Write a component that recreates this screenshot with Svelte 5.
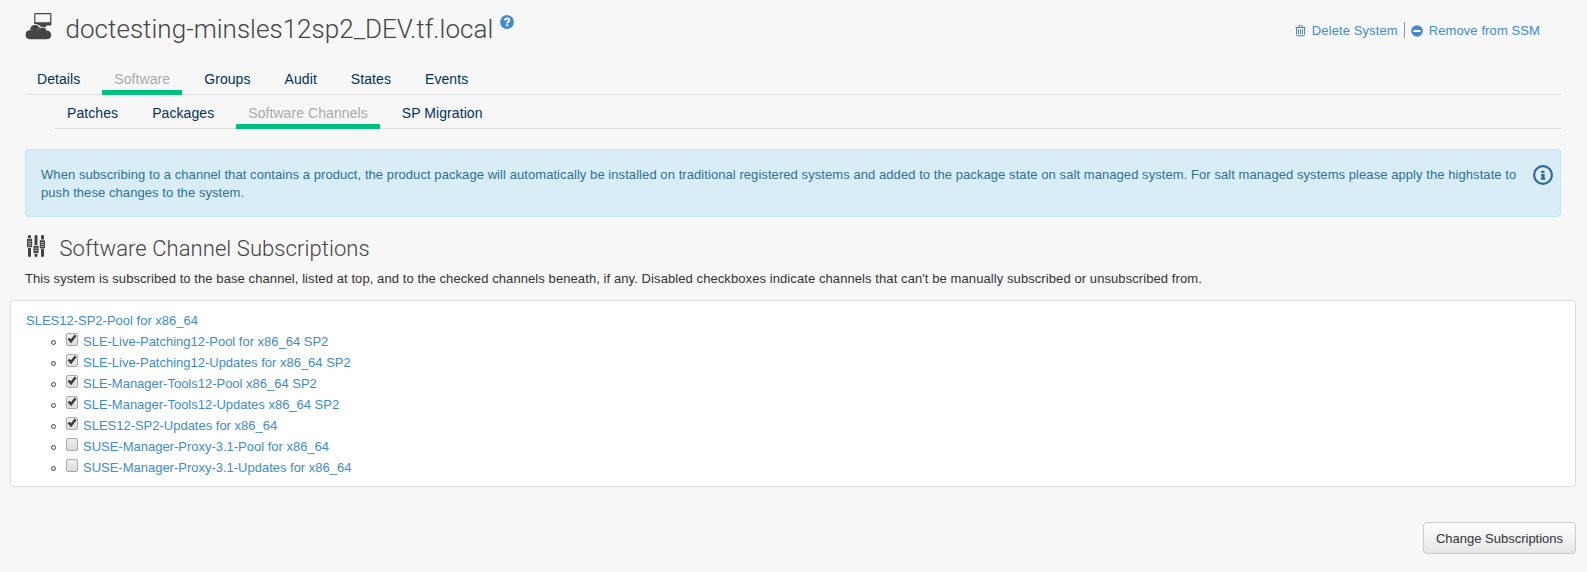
<script>
  const tabs = ['Details', 'Software', 'Groups', 'Audit', 'States', 'Events'];
  const subtabs = ['Patches', 'Packages', 'Software Channels', 'SP Migration'];
  let channels = $state([
    { name: 'SLE-Live-Patching12-Pool for x86_64 SP2', on: true },
    { name: 'SLE-Live-Patching12-Updates for x86_64 SP2', on: true },
    { name: 'SLE-Manager-Tools12-Pool x86_64 SP2', on: true },
    { name: 'SLE-Manager-Tools12-Updates x86_64 SP2', on: true },
    { name: 'SLES12-SP2-Updates for x86_64', on: true },
    { name: 'SUSE-Manager-Proxy-3.1-Pool for x86_64', on: false },
    { name: 'SUSE-Manager-Proxy-3.1-Updates for x86_64', on: false }
  ]);
</script>

<main>
  <header>
    <svg class="sys" width="27" height="27" viewBox="0 0 27 27">
      <path fill="#444" fill-rule="evenodd" d="M10.3 0H25.2Q26.4 0 26.4 1.2V11.4Q26.4 12.6 25.2 12.6H21L21.200 14.300H15.400V12.600H10.300Q9.200 12.600 9.200 11.400V1.200Q9.200 0 10.300 0ZM10.400 1.200V9.300H25.200V1.200Z" />
      <path fill="#444" stroke="#f7f7f7" stroke-width="1.600" paint-order="stroke" d="M5.400 26.300C2.500 26.300.6 24.700.6 21.700C.6 19 2.500 17.200 5.400 17.100C4.800 14 7 11.900 9.900 11.900C12.400 11.900 14.200 13.200 15 15.200C18 13.800 21.100 15 21.300 17.600C24.200 17.500 26.200 19.200 26.200 21.900C26.200 24.700 24.300 26.300 21.500 26.300Z" />
      <path fill="none" stroke="#999" stroke-width=".6" d="M15 15.200C13.600 15.600 12.700 16.500 12.400 17.600M5.400 17.100Q6.500 17 7.600 17.500" />
    </svg>
    <h1>doctesting-minsles12sp2_DEV.tf.local</h1>
    <svg class="help" width="14" height="14" viewBox="0 0 14 14">
      <circle cx="7" cy="7" r="6.9" fill="#428bca" />
      <path d="M4.8 5.3Q5.1 3.5 7.1 3.5Q9.3 3.5 9.3 5.3Q9.3 6.3 8.1 6.9Q7.2 7.4 7.2 8.4" fill="none" stroke="#fff" stroke-width="1.9" />
      <rect x="6.2" y="9.3" width="2" height="1.9" fill="#fff" />
    </svg>
    <nav class="actions">
      <a href="#delete">
        <svg width="11" height="12" viewBox="0 0 11 12" fill="none" stroke="#428bca">
          <path d="M.5 2.5H10.500M3.300 2.300V1.500Q3.300.7 4 .7H7Q7.700.7 7.700 1.500V2.300M1.500 2.700V9.600Q1.500 10.800 2.800 10.800H8.200Q9.500 10.800 9.500 9.600V2.700M3.500 4.300V9.200M5.500 4.300V9.200M7.500 4.300V9.200" />
        </svg><span>Delete System</span>
      </a>
      <a class="second" href="#remove">
        <svg width="12" height="12" viewBox="0 0 12 12">
          <circle cx="6" cy="6" r="5.8" fill="#428bca" />
          <rect x="2.5" y="5" width="7" height="2" rx=".4" fill="#fff" />
        </svg><span>Remove from SSM</span>
      </a>
    </nav>
  </header>

  <nav class="tabs">
    {#each tabs as t, i}<a href="#tab" class:active={i === 1}>{t}</a>{/each}
  </nav>
  <nav class="tabs sub">
    {#each subtabs as t, i}<a href="#tab" class:active={i === 2}>{t}</a>{/each}
  </nav>

  <div class="alert">
    <p>When subscribing to a channel that contains a product, the product package will automatically be installed on traditional registered systems and added to the package state on salt managed system. For salt managed systems please apply the highstate to push these changes to the system.</p>
    <svg width="20" height="20" viewBox="0 0 20 20">
      <circle cx="10" cy="10" r="8.9" fill="none" stroke="#31689b" stroke-width="2.2" />
      <path fill="#31689b" d="M8.300 5.800H11.500V8H8.300ZM8 9H11.700V13H12.200V14.700H7.900V13H8.500V10.400H8Z" />
    </svg>
  </div>

  <div class="heading">
    <svg width="18" height="22" viewBox="0 0 18 22" fill="#444">
      <path d="M1 1Q1 0 2.500 0T4 1V3H1ZM1 13H4V21Q4 22 2.500 22T1 21ZM7.500 1Q7.500 0 9 0T10.500 1V10H7.500ZM7.500 19H10.500V21Q10.500 22 9 22T7.500 21ZM14 1Q14 0 15.500 0T17 1V4.500H14ZM14 14H17V21Q17 22 15.500 22T14 21Z" />
      <path d="M0 4.500Q0 3.800.8 3.800H4.400Q5.200 3.800 5.200 4.500V11.500Q5.200 12.200 4.400 12.200H.8Q0 12.200 0 11.500ZM6.400 11.500Q6.400 10.800 7.200 10.800H10.800Q11.600 10.800 11.600 11.500V17.500Q11.600 18.200 10.800 18.200H7.200Q6.400 18.200 6.400 17.500ZM12.800 6Q12.800 5.300 13.600 5.300H17.200Q18 5.300 18 6V12.700Q18 13.400 17.200 13.400H13.600Q12.800 13.400 12.800 12.700Z" />
      <path stroke="#ccc" stroke-width=".8" d="M1 6.300H4.200M1 8.300H4.200M1 10.300H4.200M7.400 13.200H10.600M7.400 15.600H10.600M13.800 7.500H17M13.800 9.500H17M13.800 11.500H17" />
    </svg>
    <h2>Software Channel Subscriptions</h2>
  </div>
  <p class="intro">This system is subscribed to the base channel, listed at top, and to the checked channels beneath, if any. Disabled checkboxes indicate channels that can't be manually subscribed or unsubscribed from.</p>

  <section>
    <a class="base" href="#base">SLES12-SP2-Pool for x86_64</a>
    <ul>
      {#each channels as c}
        <li>
          <i></i>
          <span class="box">
            <input type="checkbox" aria-label={c.name} bind:checked={c.on} />
            {#if c.on}
              <svg width="12" height="12" viewBox="0 0 12 12"><path d="M2.500 5.500L5 8.200L9.600 2.300" fill="none" stroke="#3c3c3c" stroke-width="2.500" /></svg>
            {/if}
          </span>
          <a href="#channel">{c.name}</a>
        </li>
      {/each}
    </ul>
  </section>

  <footer><button>Change Subscriptions</button></footer>
</main>

<style>
  :global(body) { background: #f7f7f7; }
  main {
    box-sizing: border-box;
    height: 572px;
    overflow: hidden;
    padding: 0 26px 0 25px;
    color: #333;
    font: 13px/18px "Liberation Sans", Arial, sans-serif;
  }
  a { color: #428bca; text-decoration: none; }
  svg { display: block; flex: none; }
  p, h1, h2, ul { margin: 0; padding: 0; }
  h1, h2 { font-family: Roboto, sans-serif; font-weight: 300; color: #444; white-space: nowrap; }
  header { display: flex; height: 61px; align-items: flex-start; }
  .sys { margin-top: 13px; }
  h1 { margin: 12px 0 0 13.5px; font-size: 26px; line-height: 34px; letter-spacing: .03px; }
  .help { margin: 15px 0 0 6.5px; }
  .actions { display: flex; margin: 22px 21px 0 auto; height: 16px; letter-spacing: .1px; }
  .actions a { display: flex; align-items: center; white-space: nowrap; }
  .actions span { padding-top: 2px; }
  .actions svg { margin: 1px 6px 0 0; }
  .actions .second { margin-left: 6px; padding-left: 6px; border-left: 1px solid #999; }
  .tabs {
    display: flex;
    gap: 10px;
    box-sizing: border-box;
    height: 34px;
    border-bottom: 1px solid #ddd;
    font-size: 14px;
    letter-spacing: .075px;
  }
  .tabs a {
    box-sizing: border-box;
    height: 34px;
    padding: 9px 12px 0;
    border-bottom: 5px solid transparent;
    color: #00325a;
    white-space: nowrap;
  }
  .tabs a.active { color: #aaa; border-color: #00c081; }
  .sub { margin-left: 30px; }
  .alert {
    display: flex;
    box-sizing: border-box;
    height: 68px;
    margin-top: 20px;
    padding: 15px 7px 0 15px;
    border: 1px solid #bce8f1;
    border-radius: 4px;
    background: #d9edf7;
    color: #31708f;
  }
  .alert p { width: 1485px; padding-top: 1px; letter-spacing: .068px; }
  .alert svg { margin: 0 0 0 auto; }
  .heading { display: flex; height: 48px; }
  .heading svg { margin: 18px 0 0 2px; }
  h2 { margin: 17px 0 0 14.5px; font-size: 22px; line-height: 30px; letter-spacing: .07px; }
  .intro { margin-top: 5px; white-space: nowrap; letter-spacing: .085px; }
  section {
    box-sizing: border-box;
    height: 187px;
    margin: 12px -15px 0;
    padding: 11px 15px;
    border: 1px solid #ddd;
    border-radius: 4px;
    background: #fff;
  }
  .base { display: block; height: 21px; }
  ul { list-style: none; }
  li { display: flex; height: 21px; padding-left: 25px; letter-spacing: -.01px; }
  li i { box-sizing: border-box; width: 5px; height: 5px; margin: 7px 10px 0 0; border: 1px solid #444; border-radius: 50%; }
  .box { display: grid; width: 12px; height: 13px; margin-right: 5px; }
  .box > * { grid-area: 1 / 1; }
  .box svg { pointer-events: none; z-index: 1; }
  input {
    appearance: none;
    box-sizing: border-box;
    width: 12px;
    height: 13px;
    margin: 0;
    border: 1px solid #aaa;
    border-radius: 2px;
    background: linear-gradient(#eee, #ddd);
  }
  footer { display: flex; justify-content: flex-end; margin: 35px -15px 0 0; }
  button {
    box-sizing: border-box;
    width: 153px;
    height: 32px;
    padding: 2px 0 0;
    border: 1px solid #ccc;
    border-radius: 4px;
    background: linear-gradient(#fff, #e6e6e6);
    color: #333;
    font: inherit;
  }
</style>
